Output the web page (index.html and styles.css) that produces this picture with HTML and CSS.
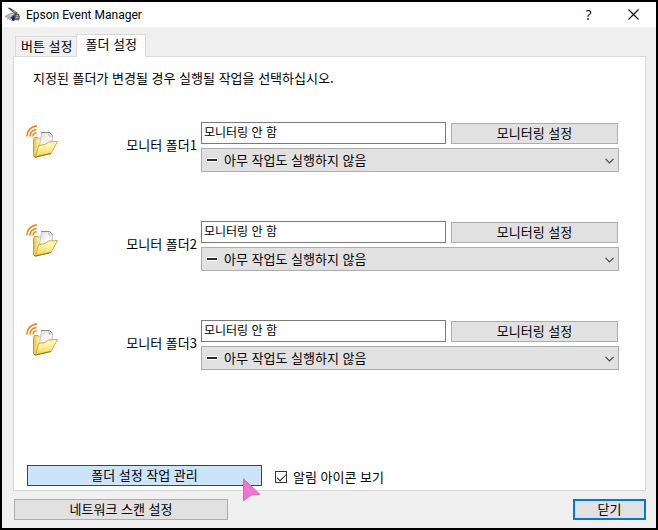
FILE: index.html
```html
<!DOCTYPE html>
<html lang="ko">
<head>
<meta charset="utf-8">
<title>Epson Event Manager</title>
<link rel="stylesheet" href="styles.css">
</head>
<body>
<svg class="defs" aria-hidden="true">
  <defs>
    <linearGradient id="paper" x1="0" y1="0" x2="1" y2="1">
      <stop offset="0" stop-color="#d4d4d4"/><stop offset="0.5" stop-color="#fafafa"/><stop offset="1" stop-color="#e4e4e4"/>
    </linearGradient>
    <linearGradient id="back" x1="0" y1="0" x2="1" y2="0">
      <stop offset="0" stop-color="#e3c148"/><stop offset="0.3" stop-color="#fff3a0"/><stop offset="1" stop-color="#e9cb56"/>
    </linearGradient>
    <linearGradient id="front" x1="0" y1="0" x2="0" y2="1">
      <stop offset="0" stop-color="#fffad0"/><stop offset="0.5" stop-color="#ffee94"/><stop offset="1" stop-color="#f2cd48"/>
    </linearGradient>
    <symbol id="folder" viewBox="0 0 34 34">
      <g fill="none" stroke="#f98008" stroke-width="1.5">
        <path d="M.8 11.500C.8 6 4.500 1.500 11 1"/>
        <path d="M4 11.500C4 8 6.500 5 10.500 4.500"/>
        <path d="M7 11.500C7 9.500 8.500 8 10.500 7.500"/>
      </g>
      <path d="M7.500 14.500L8.500 12.500H12L14 14.500H25L23 28L9.500 32L7.500 31Z" fill="url(#back)" stroke="#c9a12c"/>
      <path d="M13 24L15.500 7.500H23.500L26.500 10.500L26 18L22 20Z" fill="url(#paper)" stroke="#c8c8c8"/>
      <path d="M15 7.500H23.500L26.500 10.500" fill="none" stroke="#8a8a8a"/>
      <path d="M23 8V11H26.500" fill="#fff" stroke="#a8a8a8" stroke-width=".8"/>
      <path d="M12.500 20.500L19 19.500L22.500 17L31.500 16.500L25 28.500L9.500 32Z" fill="url(#front)" stroke="#d0ab3a"/>
      <path d="M25 28.500L9.500 32L8 31.500" fill="none" stroke="#977518"/>
    </symbol>
    <symbol id="chevron" viewBox="0 0 9 6"><path d="M.5 .8L4.500 4.800L8.500 .8" fill="none" stroke="#444" stroke-width="1.2"/></symbol>
    <symbol id="dash" viewBox="0 0 12 4"><path d="M0 0H12V4H0Z" fill="#fff"/><path d="M1 1H11V3H1Z" fill="#2b2b33"/></symbol>
  </defs>
</svg>
<div class="window">
  <header class="titlebar">
    <svg class="app-icon" viewBox="0 0 16 16" aria-hidden="true">
      <path d="M2.500 .8L5 .8L13 6L10.500 7.500Z" fill="#444"/>
      <path d="M6 3L12 5L10 6Z" fill="#999"/>
      <path d="M0 9.500L6 6L10 7L5 11Z" fill="#c4c4c4" stroke="#777" stroke-width=".6"/>
      <path d="M5 11L10 6.500L14 7L15 10L14 13.500L7 12.500Z" fill="#5a5a5a"/>
      <path d="M2 11.500L6 12.500L7 14" fill="none" stroke="#999"/>
      <path d="M7 10L9.500 9L9.500 14L7 13.500Z" fill="#17177c"/>
      <path d="M10.500 11L13.500 10.500M11 9L13 8.500" stroke="#ccc"/>
    </svg>
    <h1 class="title">Epson Event Manager</h1>
    <button class="caption-button help" type="button" aria-label="도움말">?</button>
    <button class="caption-button" type="button" aria-label="창 닫기">
      <svg class="close-icon" viewBox="0 0 11 11"><path d="M.5 .5L10.500 10.500M10.500 .5L.5 10.500" stroke="#000" stroke-width="1.1"/></svg>
    </button>
  </header>

  <main class="content">
    <div class="tabs" role="tablist">
      <button class="tab" type="button" role="tab" aria-selected="false">버튼 설정</button>
      <button class="tab active" type="button" role="tab" aria-selected="true">폴더 설정</button>
    </div>
    <section class="panel" role="tabpanel">
      <p class="intro">지정된 폴더가 변경될 경우 실행될 작업을 선택하십시오.</p>
      <div class="monitors">
        <div class="monitor">
          <svg class="folder-icon" aria-hidden="true"><use href="#folder"/></svg>
          <label class="name" for="path1">모니터 폴더1</label>
          <div class="fields">
            <div class="path-row">
              <input class="path" id="path1" type="text" value="모니터링 안 함" readonly>
              <button class="button" type="button">모니터링 설정</button>
            </div>
            <div class="action">
              <svg class="dash" aria-hidden="true"><use href="#dash"/></svg>
              <select class="select" aria-label="모니터 폴더1 작업"><option>아무 작업도 실행하지 않음</option></select>
              <svg class="chevron" aria-hidden="true"><use href="#chevron"/></svg>
            </div>
          </div>
        </div>
        <div class="monitor">
          <svg class="folder-icon" aria-hidden="true"><use href="#folder"/></svg>
          <label class="name" for="path2">모니터 폴더2</label>
          <div class="fields">
            <div class="path-row">
              <input class="path" id="path2" type="text" value="모니터링 안 함" readonly>
              <button class="button" type="button">모니터링 설정</button>
            </div>
            <div class="action">
              <svg class="dash" aria-hidden="true"><use href="#dash"/></svg>
              <select class="select" aria-label="모니터 폴더2 작업"><option>아무 작업도 실행하지 않음</option></select>
              <svg class="chevron" aria-hidden="true"><use href="#chevron"/></svg>
            </div>
          </div>
        </div>
        <div class="monitor">
          <svg class="folder-icon" aria-hidden="true"><use href="#folder"/></svg>
          <label class="name" for="path3">모니터 폴더3</label>
          <div class="fields">
            <div class="path-row">
              <input class="path" id="path3" type="text" value="모니터링 안 함" readonly>
              <button class="button" type="button">모니터링 설정</button>
            </div>
            <div class="action">
              <svg class="dash" aria-hidden="true"><use href="#dash"/></svg>
              <select class="select" aria-label="모니터 폴더3 작업"><option>아무 작업도 실행하지 않음</option></select>
              <svg class="chevron" aria-hidden="true"><use href="#chevron"/></svg>
            </div>
          </div>
        </div>
      </div>
      <div class="panel-footer">
        <div class="manage-wrap">
          <button class="button manage" type="button">폴더 설정 작업 관리</button>
          <svg class="pointer" viewBox="0 0 18 24" aria-hidden="true"><path d="M.5 .8L17 16.500L8.500 17L.5 22.800Z" fill="#f273d0" stroke="#d468b4"/></svg>
        </div>
        <label class="check"><input class="checkbox" type="checkbox" checked>알림 아이콘 보기</label>
      </div>
    </section>
    <footer class="footer">
      <button class="button network" type="button">네트워크 스캔 설정</button>
      <button class="button close" type="button">닫기</button>
    </footer>
  </main>
</div>
</body>
</html>
```
FILE: styles.css
```css
* {
  box-sizing: border-box;
}

body {
  margin: 0;
  color: #000;
  font: 13px/18px "Noto Sans CJK KR", sans-serif;
}

button,
input,
select {
  margin: 0;
  border-radius: 0;
  color: inherit;
  font: inherit;
}

.defs {
  position: absolute;
  width: 0;
  height: 0;
}

.window {
  display: flex;
  flex-direction: column;
  min-height: 100vh;
  border: 2px solid #000;
  background: #f0f0f0;
}

/* Title bar */
.titlebar {
  display: flex;
  align-items: center;
  height: 25px;
  padding-left: 3px;
  background: #fff;
}

.app-icon {
  width: 16px;
  height: 16px;
}

.title {
  flex: 1;
  margin: 0 0 0 5px;
  font-family: Roboto, sans-serif;
  font-size: 12px;
  font-weight: 400;
}

.caption-button {
  display: flex;
  align-items: center;
  justify-content: center;
  width: 45px;
  height: 25px;
  padding: 0;
  border: 0;
  background: none;
}

.help {
  font-family: "Open Sans", sans-serif;
  font-size: 14px;
}

.close-icon {
  width: 11px;
  height: 11px;
}

/* Tabs */
.content {
  display: flex;
  flex: 1;
  flex-direction: column;
  padding: 7px 10px 8px 11px;
}

.tabs {
  display: flex;
  align-items: flex-end;
  padding-left: 2px;
}

.tab {
  height: 20px;
  padding: 0 5px 2px;
  border: 1px solid #d9d9d9;
  border-width: 1px 0 0 1px;
  background: #f0f0f0;
  line-height: 18px;
}

.tab.active {
  z-index: 1;
  height: 23px;
  margin-bottom: -1px;
  margin-left: -1px;
  padding: 0 8px 4px;
  border-width: 1px 1px 0;
  background: #fff;
}

.panel {
  display: flex;
  flex: 1;
  flex-direction: column;
  padding: 12px 26px 4px 12px;
  border: 1px solid #d9d9d9;
  background: #fff;
}

.intro {
  margin: 0 0 0 7px;
}

/* Monitored folders */
.monitors {
  display: flex;
  flex: 1;
  flex-direction: column;
  gap: 49px;
  padding-top: 35px;
}

.monitor {
  display: grid;
  grid-template-columns: 34px minmax(137px, 1fr) minmax(0, 418px);
  align-items: start;
}

.folder-icon {
  width: 34px;
  height: 34px;
  margin-top: 3px;
}

.name {
  padding: 14px 4px 0 0;
  text-align: right;
}

.path-row {
  display: grid;
  grid-template-columns: minmax(0, 245fr) minmax(0, 167fr);
  gap: 5px;
  align-items: center;
  padding-right: 1px;
}

.path {
  height: 22px;
  padding: 0 2px 3px;
  border: 1px solid #7a7a7a;
  background: #fff;
  font-size: 12px;
}

.button {
  height: 21px;
  padding: 0 8px 2px;
  border: 1px solid #adadad;
  background: #e1e1e1;
  line-height: 18px;
}

.action {
  position: relative;
  margin-top: 4px;
}

.select {
  display: block;
  width: 100%;
  height: 24px;
  padding: 0 24px 0 22px;
  border: 1px solid #adadad;
  background: #e1e1e1;
  appearance: none;
}

.dash {
  position: absolute;
  top: 10px;
  left: 5px;
  width: 12px;
  height: 4px;
  pointer-events: none;
}

.chevron {
  position: absolute;
  top: 10px;
  right: 5px;
  width: 9px;
  height: 6px;
  pointer-events: none;
}

/* Bottom of the panel */
.panel-footer {
  display: flex;
  align-items: center;
  gap: 13px;
  padding-left: 1px;
}

.manage-wrap {
  position: relative;
  flex: 0 1 235px;
}

.manage {
  display: block;
  width: 100%;
  border-color: #005499;
  background: #cce4f7;
}

.pointer {
  position: absolute;
  top: 13px;
  right: 1px;
  z-index: 2;
  width: 18px;
  height: 24px;
}

.check {
  display: flex;
  align-items: center;
  gap: 6px;
  padding-top: 3px;
}

.checkbox {
  width: 12px;
  height: 12px;
  border: 1px solid #333;
  background: #fff;
  appearance: none;
}

.checkbox:checked {
  display: grid;
  place-items: center;
}

.checkbox:checked::before {
  width: 8px;
  height: 4px;
  border: solid #222;
  border-width: 0 0 1px 1px;
  content: "";
  transform: translateY(-1px) rotate(-45deg);
}

/* Window buttons */
.footer {
  display: flex;
  justify-content: space-between;
  padding-top: 8px;
  padding-left: 1px;
}

.network {
  flex: 0 1 214px;
}

.close {
  flex: 0 1 73px;
  border: 2px solid #0078d7;
  line-height: 16px;
}
```
